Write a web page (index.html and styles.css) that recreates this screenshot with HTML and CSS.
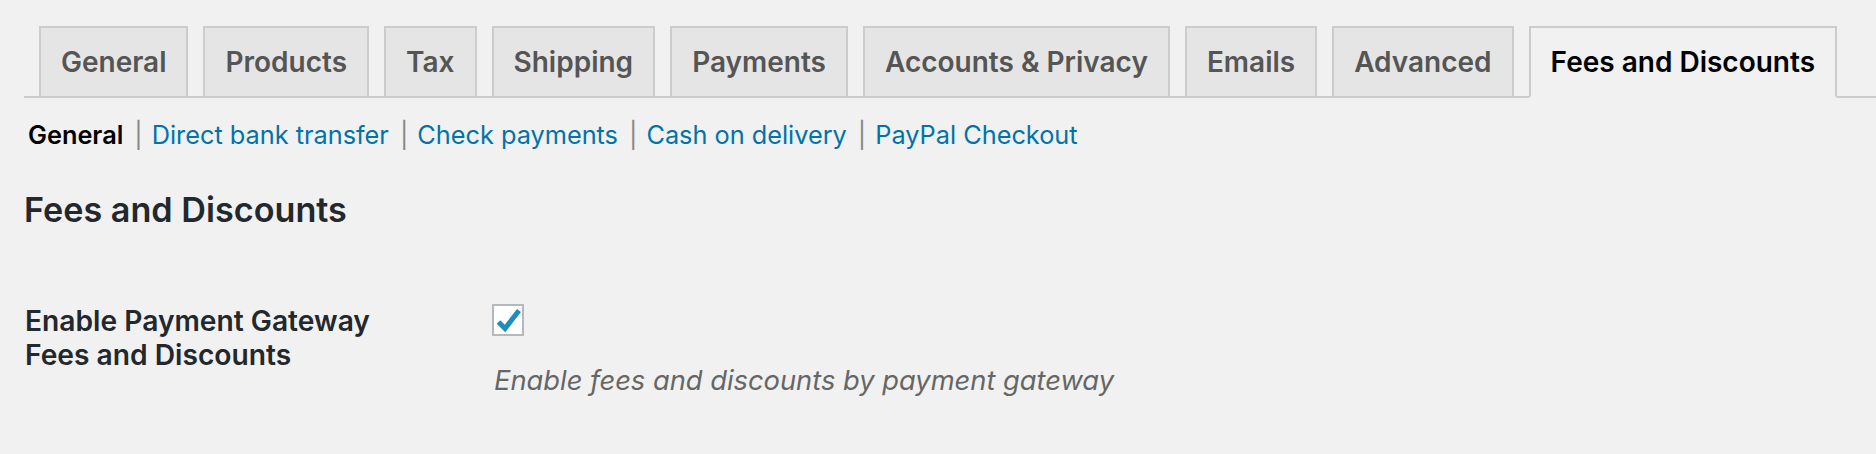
FILE: index.html
```html
<!DOCTYPE html>
<html lang="en">
<head>
  <meta charset="UTF-8">
  <title>WooCommerce Settings - Payments</title>
  <link rel="stylesheet" href="styles.css">
</head>
<body>
  <div class="wrap">
    <!-- Settings tabs -->
    <nav class="nav-tab-wrapper">
      <a class="nav-tab" href="#">General</a>
      <a class="nav-tab" href="#">Products</a>
      <a class="nav-tab" href="#">Tax</a>
      <a class="nav-tab" href="#">Shipping</a>
      <a class="nav-tab" href="#">Payments</a>
      <a class="nav-tab" href="#">Accounts &amp; Privacy</a>
      <a class="nav-tab" href="#">Emails</a>
      <a class="nav-tab" href="#">Advanced</a>
      <a class="nav-tab nav-tab-active" href="#">Fees and Discounts</a>
    </nav>

    <!-- Payment sections -->
    <ul class="subsubsub">
      <li><span class="current">General</span><span class="sep">|</span></li>
      <li><a href="#">Direct bank transfer</a><span class="sep">|</span></li>
      <li><a href="#">Check payments</a><span class="sep">|</span></li>
      <li><a href="#">Cash on delivery</a><span class="sep">|</span></li>
      <li><a href="#">PayPal Checkout</a></li>
    </ul>

    <h2 class="section-title">Fees and Discounts</h2>

    <div class="form-row">
      <div class="form-label">Enable Payment Gateway<br>Fees and Discounts</div>
      <div class="form-field">
        <span class="check-box">
          <svg width="28" height="28" viewBox="0 0 28 28">
            <polyline points="4.5,16 11,22.5 25,4.5" fill="none" stroke="#1e8cbe" stroke-width="5"/>
          </svg>
        </span>
        <p class="description">Enable fees and discounts by payment gateway</p>
      </div>
    </div>
  </div>
</body>
</html>
```

FILE: styles.css
```css
body {
  margin: 0;
  background: #f1f1f1;
  font-family: Inter, "Liberation Sans", Arial, sans-serif;
  color: #23282d;
}
.wrap {
  padding: 26px 0 0 24px;
}
.nav-tab-wrapper {
  display: flex;
  border-bottom: 2px solid #ccc;
}
.nav-tab {
  margin: 0 0 -2px 15px;
  padding: 10px 20px;
  border: 2px solid #ccc;
  background: #e5e5e5;
  color: #555;
  font-size: 28px;
  font-weight: 600;
  line-height: 48px;
  text-decoration: none;
  white-space: nowrap;
}
.nav-tab-active {
  background: #f1f1f1;
  border-bottom-color: #f1f1f1;
  color: #000;
}
.subsubsub {
  list-style: none;
  display: flex;
  margin: 17px 0 0;
  padding: 0 0 0 4px;
  font-size: 25.3px;
  line-height: 40px;
}
.subsubsub a {
  color: #0073aa;
  text-decoration: none;
}
.subsubsub .current {
  color: #000;
  font-weight: 600;
}
.subsubsub .sep {
  color: #888;
  margin: 0 9px 0 11px;
}
.section-title {
  margin: 33px 0 0;
  font-size: 34.2px;
  font-weight: 600;
  line-height: 44px;
}
.form-row {
  display: grid;
  grid-template-columns: 468px 1fr;
  margin-top: 72px;
}
.form-label {
  padding-left: 1px;
  font-size: 28.2px;
  font-weight: 600;
  line-height: 34px;
}
.check-box {
  display: block;
  width: 28px;
  height: 28px;
  border: 2px solid #b4b9be;
  background: #fff;
}
.check-box svg {
  display: block;
}
.description {
  margin: 28px 0 0 2px;
  color: #666;
  font-size: 27.3px;
  font-style: italic;
  line-height: 34px;
}
```
